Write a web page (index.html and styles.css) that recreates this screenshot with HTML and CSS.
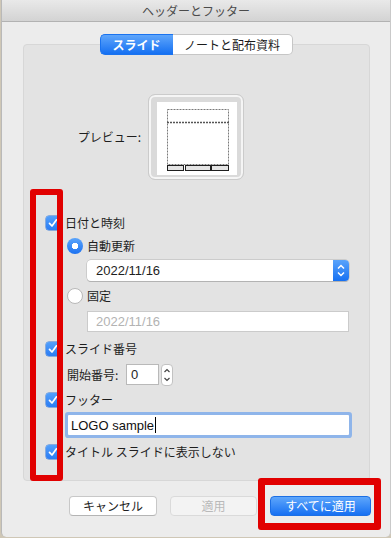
FILE: index.html
```html
<!DOCTYPE html>
<html lang="ja">
<head>
    <meta charset="UTF-8">
    <meta name="viewport" content="width=device-width, initial-scale=1.0">
    <title>ヘッダーとフッター</title>
    <link rel="stylesheet" href="styles.css">
</head>
<body>
    <div class="window">
        <div class="titlebar">ヘッダーとフッター</div>

        <div class="tabs">
            <span class="tab active">スライド</span>
            <span class="tab">ノートと配布資料</span>
        </div>

        <div class="group">
            <div class="preview-row">
                <span class="preview-label">プレビュー:</span>
                <div class="preview">
                    <svg width="80" height="73" viewBox="0 0 80 73">
                        <rect x="0" y="0" width="80" height="73" fill="#fff"/>
                        <rect x="10.5" y="7.5" width="61" height="55" fill="none" stroke="#7a7a7a" stroke-dasharray="2 1"/>
                        <line x1="10" y1="20.5" x2="72" y2="20.5" stroke="#555" stroke-width="1.6" stroke-dasharray="2 1"/>
                        <rect x="10.5" y="63.5" width="16" height="5" fill="#e4e4e4" stroke="#1e1e1e"/>
                        <rect x="28.5" y="63.5" width="25" height="5" fill="#e4e4e4" stroke="#1e1e1e"/>
                        <rect x="54.5" y="63.5" width="17" height="5" fill="#e4e4e4" stroke="#1e1e1e"/>
                    </svg>
                </div>
                <span></span>
            </div>

            <div class="options">
                <div class="row check-row first">
                    <span class="checkbox"><svg width="14" height="14" viewBox="0 0 14 14"><polyline points="3.5,7.3 6,10 10.5,3.8" fill="none" stroke="#fff" stroke-width="1.7" stroke-linecap="round" stroke-linejoin="round"/></svg></span>
                    日付と時刻
                </div>
                <div class="row radio-row">
                    <span class="radio on"></span>自動更新
                </div>
                <div class="popup">
                    <span class="popup-value">2022/11/16</span>
                    <span class="popup-arrows">
                        <svg width="16" height="21" viewBox="0 0 16 21"><polyline points="5,8.5 8,5.5 11,8.5" fill="none" stroke="#fff" stroke-width="1.5"/><polyline points="5,12.5 8,15.5 11,12.5" fill="none" stroke="#fff" stroke-width="1.5"/></svg>
                    </span>
                </div>
                <div class="row radio-row second">
                    <span class="radio"></span>固定
                </div>
                <div class="field disabled">2022/11/16</div>

                <div class="row check-row slide-no">
                    <span class="checkbox"><svg width="14" height="14" viewBox="0 0 14 14"><polyline points="3.5,7.3 6,10 10.5,3.8" fill="none" stroke="#fff" stroke-width="1.7" stroke-linecap="round" stroke-linejoin="round"/></svg></span>
                    スライド番号
                </div>
                <div class="start-row">
                    <span class="start-label">開始番号:</span>
                    <span class="number-field">0</span>
                    <span class="stepper">
                        <svg width="12" height="22" viewBox="0 0 12 22"><polyline points="3.5,8 6,5.5 8.5,8" fill="none" stroke="#444" stroke-width="1.2"/><polyline points="3.5,14 6,16.5 8.5,14" fill="none" stroke="#444" stroke-width="1.2"/></svg>
                    </span>
                </div>

                <div class="row check-row footer-check">
                    <span class="checkbox"><svg width="14" height="14" viewBox="0 0 14 14"><polyline points="3.5,7.3 6,10 10.5,3.8" fill="none" stroke="#fff" stroke-width="1.7" stroke-linecap="round" stroke-linejoin="round"/></svg></span>
                    フッター
                </div>
                <div class="field focused">LOGO sample<span class="caret"></span></div>

                <div class="row check-row title-check">
                    <span class="checkbox"><svg width="14" height="14" viewBox="0 0 14 14"><polyline points="3.5,7.3 6,10 10.5,3.8" fill="none" stroke="#fff" stroke-width="1.7" stroke-linecap="round" stroke-linejoin="round"/></svg></span>
                    タイトル スライドに表示しない
                </div>
            </div>
        </div>

        <div class="buttons">
            <button class="btn">キャンセル</button>
            <button class="btn disabled">適用</button>
            <button class="btn primary">すべてに適用</button>
        </div>

        <!-- red annotation boxes over the dialog -->
        <div class="mark mark-left"></div>
        <div class="mark mark-right"></div>
    </div>
</body>
</html>
```

FILE: styles.css
```css
body {
    margin: 0;
    background: #cfc7b6;
    font-family: "Noto Sans CJK JP", "Liberation Sans", sans-serif;
    font-size: 12px;
    color: #1e1e1e;
}

.window {
    position: relative;
    width: 390px;
    height: 537px;
    margin-left: 1px;
    background: #ececec;
    border-left: 1px solid #b9b9b9;
    border-right: 1px solid #c9c9c9;
    border-radius: 0 0 5px 5px;
    box-sizing: border-box;
    overflow: hidden;
}

.titlebar {
    height: 21px;
    line-height: 21px;
    text-align: center;
    color: #4b4b4b;
    font-size: 12px;
    background: linear-gradient(#e9e9e9, #d3d3d3);
    border-bottom: 1px solid #b2b2b2;
}

.tabs {
    position: relative;
    z-index: 1;
    display: flex;
    justify-content: center;
    margin: 12px 0 -11px;
}

.tab {
    height: 21px;
    line-height: 19px;
    box-sizing: border-box;
    padding: 0 0;
    text-align: center;
    background: #fff;
    border: 1px solid #c6c6c6;
    color: #1a1a1a;
    font-size: 12px;
}

.tab:first-child {
    width: 73px;
    border-radius: 5px 0 0 5px;
    border-right: none;
}

.tab:last-child {
    width: 120px;
    border-radius: 0 5px 5px 0;
    border-left: none;
}

.tab.active {
    background: linear-gradient(#5fa6fb, #1570f2);
    border-color: #1a73ef;
    color: #fff;
    font-weight: bold;
}

.group {
    margin: 0 20px 0 21px;
    padding: 49px 0 18px;
    background: #e3e3e3;
    border: 1px solid #d7d7d7;
    border-radius: 4px;
}

.preview-row {
    display: grid;
    grid-template-columns: 1fr auto 1fr;
    align-items: center;
    column-gap: 7px;
    margin-left: -1px;
}

.preview-label {
    justify-self: end;
    line-height: 16px;
}

.preview {
    width: 96px;
    height: 86px;
    box-sizing: border-box;
    padding: 7px 6px 4px 8px;
    background: #dadada;
    border: 1px solid #cbcbcb;
    border-radius: 7px;
    box-shadow: inset 0 0 0 2px #f5f5f5;
}

.preview svg {
    display: block;
}

.options {
    padding-left: 22px;
    display: flex;
    flex-direction: column;
    align-items: flex-start;
}

.row {
    display: flex;
    align-items: center;
    line-height: 16px;
}

.check-row {
    height: 21px;
}

.check-row.first { margin-top: 32px; }
.check-row.slide-no { margin-top: 6px; }
.check-row.footer-check { margin-top: 4px; }
.check-row.title-check { margin-top: 6px; }

.checkbox {
    width: 14px;
    height: 14px;
    margin-right: 5px;
    border-radius: 3px;
    background: linear-gradient(#53a0fb, #2b7cf3);
    box-shadow: 0 0 0 0.5px #2e74d8;
}

.checkbox svg {
    display: block;
}

.radio-row {
    height: 20px;
    margin-left: 21px;
    margin-top: 3px;
}

.radio-row.second {
    margin-top: 5px;
}

.radio {
    width: 16px;
    height: 16px;
    margin-right: 4px;
    box-sizing: border-box;
    border-radius: 50%;
    background: #fff;
    border: 1px solid #b8b8b8;
}

.radio.on {
    border: none;
    background: radial-gradient(circle, #fff 0 3px, transparent 3.5px), linear-gradient(#5aa4fb, #1d72f1);
}

.popup {
    display: flex;
    width: 262px;
    height: 21px;
    margin: 4px 0 0 41px;
    background: #fff;
    border-radius: 4px;
    box-shadow: 0 0 0 0.5px #b5b5b5, 0 1px 0 #b0b0b0;
    font-family: "Liberation Sans", sans-serif;
    font-size: 13px;
}

.popup-value {
    flex: 1;
    padding-left: 9px;
    line-height: 21px;
}

.popup-arrows {
    width: 16px;
    border-radius: 0 4px 4px 0;
    background: linear-gradient(#5aa4fb, #1670f2);
}

.popup-arrows svg {
    display: block;
}

.field {
    width: 262px;
    height: 21px;
    box-sizing: border-box;
    margin: 5px 0 0 41px;
    padding-left: 8px;
    line-height: 19px;
    background: #fff;
    border: 1px solid #cbcbcb;
    font-family: "Liberation Sans", sans-serif;
    font-size: 13px;
    color: #111;
}

.field.disabled {
    color: #b3b3b3;
}

.field.focused {
    width: 281px;
    height: 20px;
    margin: 5px 0 0 22px;
    padding-left: 3px;
    line-height: 19px;
    border: none;
    box-shadow: 0 0 0 3px #8fb5ea;
    border-radius: 1px;
    display: flex;
    align-items: center;
}

.caret {
    width: 1px;
    height: 16px;
    margin-left: 1px;
    background: #000;
}

.start-row {
    display: flex;
    align-items: center;
    height: 21px;
    margin: 5px 0 0 21px;
}

.start-label {
    width: 59px;
    line-height: 16px;
}

.number-field {
    width: 33px;
    height: 21px;
    box-sizing: border-box;
    padding-left: 4px;
    line-height: 19px;
    background: #fff;
    border: 1px solid #b9b9b9;
    font-family: "Liberation Sans", sans-serif;
    font-size: 13px;
}

.stepper {
    width: 12px;
    height: 22px;
    margin-left: 2px;
    box-sizing: border-box;
    background: #fff;
    border: 1px solid #c2c2c2;
    border-radius: 4px;
    overflow: hidden;
}

.stepper svg {
    display: block;
    margin: -1px 0 0 -1px;
}

.buttons {
    display: flex;
    justify-content: flex-end;
    gap: 13px;
    margin-top: 15px;
    padding-right: 19px;
}

.btn {
    height: 20px;
    padding: 0;
    box-sizing: border-box;
    font-family: "Noto Sans CJK JP", sans-serif;
    font-size: 12px;
    line-height: 18px;
    color: #1e1e1e;
    background: #fff;
    border: 1px solid #c8c8c8;
    border-bottom-color: #b4b4b4;
    border-radius: 4px;
}

.btn:first-child { width: 88px; }

.btn.disabled {
    width: 87px;
    color: #b9b9b9;
    background: #f3f3f3;
    border-color: #dadada;
}

.btn.primary {
    width: 101px;
    color: #fff;
    background: linear-gradient(#5ea6fb, #1670f2);
    border-color: #1c6fe4;
}

.mark {
    position: absolute;
    box-sizing: border-box;
    border: 6px solid #e10000;
    border-radius: 3px;
}

.mark-left {
    left: 28px;
    top: 189px;
    width: 33px;
    height: 292px;
}

.mark-right {
    left: 256px;
    top: 478px;
    width: 123px;
    height: 52px;
    border-width: 7px;
}
```
